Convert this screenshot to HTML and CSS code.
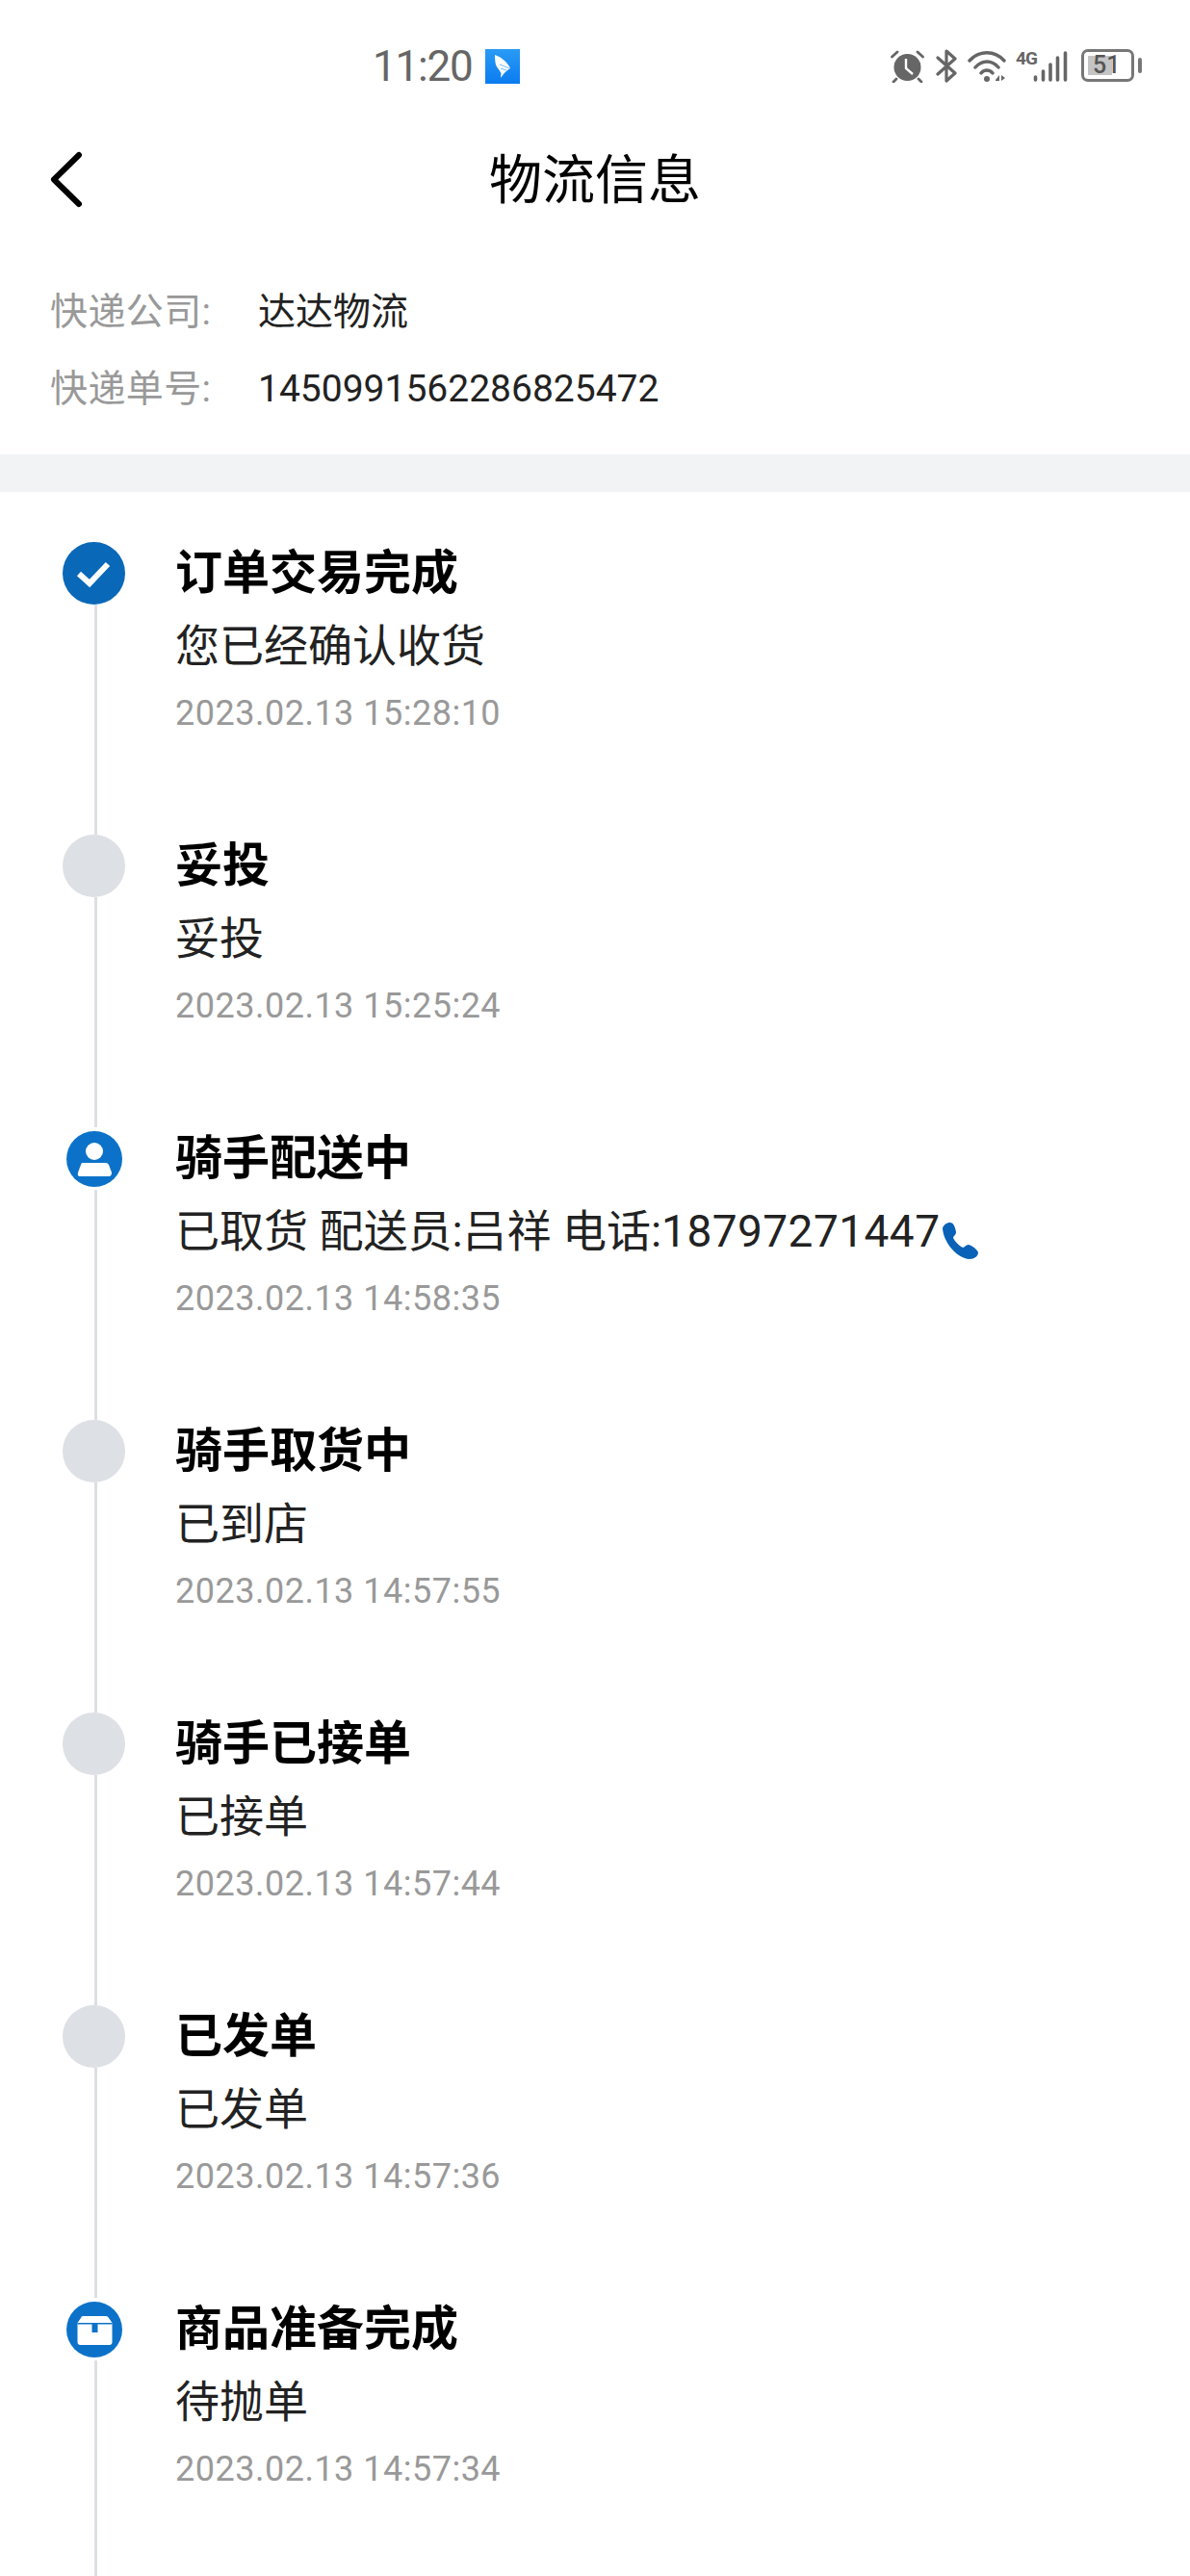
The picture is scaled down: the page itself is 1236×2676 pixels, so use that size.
FILE: index.html
```html
<!DOCTYPE html>
<html lang="zh-CN">
<head>
    <meta charset="UTF-8">
    <meta name="viewport" content="width=device-width, initial-scale=1.0">
    <title>物流信息</title>
    <link rel="stylesheet" href="styles.css">
</head>
<body>
    <div class="statusbar">
        <div class="status-center">
            <span class="clock">11:20</span>
            <svg class="app-icon" viewBox="0 0 36 36">
                <defs>
                    <linearGradient id="appBlue" x1="0" y1="0" x2="0" y2="1">
                        <stop offset="0" stop-color="#2a9bf5"/>
                        <stop offset="1" stop-color="#0a7cf0"/>
                    </linearGradient>
                </defs>
                <rect width="36" height="36" fill="url(#appBlue)"/>
                <path d="M10 6 C16 8 23 13 26 20 C23 22 20 24 16 30 L16.5 25 L14 21 C11 18 10 14 10 6 Z" fill="#fff"/>
                <path d="M25 20 L15 16 M22 22 L16 20" stroke="#4aa8f5" stroke-width="0.8"/>
            </svg>
        </div>
        <div class="status-right">
            <svg class="ic-alarm" viewBox="0 0 35 34">
                <circle cx="17.5" cy="18" r="14" fill="#666"/>
                <path d="M16 9 V19 L23 25" fill="none" stroke="#fff" stroke-width="2.4"/>
                <path d="M1.5 7 L7 2 M28 2 L33.5 7 M6 30 L3 33 M29 30 L32 33" stroke="#666" stroke-width="2.8" stroke-linecap="round"/>
            </svg>
            <svg class="ic-bt" viewBox="0 0 22 35">
                <path d="M2 9 L20 25 L11 33 V2 L20 10 L2 26" fill="none" stroke="#666" stroke-width="3.2" stroke-linejoin="round" stroke-linecap="round"/>
            </svg>
            <svg class="ic-wifi" viewBox="0 0 40 33">
                <path d="M2 11 C12 0 28 0 38 11 M8 18 C15 10 25 10 32 18 M14 24 C17 20 23 20 26 24" fill="none" stroke="#666" stroke-width="3.4" stroke-linecap="round"/>
                <circle cx="20" cy="30" r="3" fill="#666"/>
                <path d="M29 31 L33 26 V32 H29 Z M35 26 V32 L39 29 Z" fill="#666"/>
            </svg>
            <div class="signal">
                <span class="net">4G</span>
                <svg class="ic-bars" viewBox="0 0 36 32">
                    <path d="M2.5 27 V30 M10.5 21 V30 M18 14 V30 M25.5 7 V30 M33.5 2 V30" fill="none" stroke="#666" stroke-width="3.6" stroke-linecap="round"/>
                </svg>
            </div>
            <div class="battery">
                <div class="battery-body"><span class="battery-level">51</span></div>
                <div class="battery-nub"></div>
            </div>
        </div>
    </div>

    <header class="navbar">
        <svg class="back" viewBox="0 0 36 62">
            <path d="M32 6 L6 31.5 L32 57" fill="none" stroke="#000" stroke-width="6" stroke-linecap="round" stroke-linejoin="round"/>
        </svg>
        <h1>物流信息</h1>
    </header>

    <section class="info">
        <p><span class="label">快递公司:</span><span class="value">达达物流</span></p>
        <p><span class="label">快递单号:</span><span class="value">1450991562286825472</span></p>
    </section>

    <div class="band"></div>

    <ul class="timeline">
        <li class="step">
            <div class="rail">
                <div class="slot">
                    <svg class="dot-lg" viewBox="0 0 65 65">
                        <circle cx="32.5" cy="32.5" r="32.5" fill="#0a68b8"/>
                        <path d="M17 33 L28 43 L47 23" fill="none" stroke="#fff" stroke-width="6"/>
                    </svg>
                </div>
                <div class="line"></div>
            </div>
            <div class="body">
                <h3>订单交易完成</h3>
                <p class="desc">您已经确认收货</p>
                <p class="time">2023.02.13 15:28:10</p>
            </div>
        </li>
        <li class="step">
            <div class="rail">
                <div class="slot"><div class="dot-off"></div></div>
                <div class="line"></div>
            </div>
            <div class="body">
                <h3>妥投</h3>
                <p class="desc">妥投</p>
                <p class="time">2023.02.13 15:25:24</p>
            </div>
        </li>
        <li class="step">
            <div class="rail">
                <div class="slot">
                    <svg class="dot-sm" viewBox="0 0 58 58">
                        <circle cx="29" cy="29" r="29" fill="#0c72c9"/>
                        <circle cx="29" cy="21" r="9" fill="#fff"/>
                        <path d="M17 33 H41 Q43 33 44 35 L47 43 Q47 47 44 47 H14 Q11 47 12 43 L15 35 Q15 33 17 33 Z" fill="#fff"/>
                    </svg>
                </div>
                <div class="line"></div>
            </div>
            <div class="body">
                <h3>骑手配送中</h3>
                <p class="desc">已取货 配送员:吕祥 电话:<span class="tel">18797271447</span><svg class="ic-phone" viewBox="0 0 40 40"><path d="M2 7 C3 3 7 1 10 1 C13 1 15 5 16 11 C16 14 13 15 13 17 C15 21 19 25 23 27 C25 27 26 24 29 24 C33 25 38 29 39 32 C39 36 35 39 30 39 C17 38 3 22 2 7 Z" fill="#0a62b8"/></svg></p>
                <p class="time">2023.02.13 14:58:35</p>
            </div>
        </li>
        <li class="step">
            <div class="rail">
                <div class="slot"><div class="dot-off"></div></div>
                <div class="line"></div>
            </div>
            <div class="body">
                <h3>骑手取货中</h3>
                <p class="desc">已到店</p>
                <p class="time">2023.02.13 14:57:55</p>
            </div>
        </li>
        <li class="step">
            <div class="rail">
                <div class="slot"><div class="dot-off"></div></div>
                <div class="line"></div>
            </div>
            <div class="body">
                <h3>骑手已接单</h3>
                <p class="desc">已接单</p>
                <p class="time">2023.02.13 14:57:44</p>
            </div>
        </li>
        <li class="step">
            <div class="rail">
                <div class="slot"><div class="dot-off"></div></div>
                <div class="line"></div>
            </div>
            <div class="body">
                <h3>已发单</h3>
                <p class="desc">已发单</p>
                <p class="time">2023.02.13 14:57:36</p>
            </div>
        </li>
        <li class="step">
            <div class="rail">
                <div class="slot">
                    <svg class="dot-sm" viewBox="0 0 58 58">
                        <circle cx="29" cy="29" r="29" fill="#0c72c9"/>
                        <path d="M17 15 H41 Q43 15 44 17 L47.5 22 V42 Q47.5 45 44.5 45 H14.5 Q11.5 45 11.5 42 V22 L15 17 Q15.5 15 17 15 Z" fill="#fff"/>
                        <path d="M11.5 22.8 H47.5" stroke="#0c72c9" stroke-width="1.5"/>
                        <rect x="26.5" y="22" width="6" height="10" fill="#0c72c9"/>
                    </svg>
                </div>
                <div class="line"></div>
            </div>
            <div class="body">
                <h3>商品准备完成</h3>
                <p class="desc">待抛单</p>
                <p class="time">2023.02.13 14:57:34</p>
            </div>
        </li>
    </ul>
</body>
</html>
```

FILE: styles.css
```css
*{
    margin: 0;
    padding: 0;
    box-sizing: border-box;
}
html, body{
    height: 2676px;
    overflow: hidden;
}
body{
    background-color: #fff;
    color: #222;
    font-family: Roboto, "Noto Sans CJK SC", sans-serif;
}

/* status bar */
.statusbar{
    height: 120px;
    padding: 51px 50px 0 387px;
    display: flex;
    justify-content: space-between;
    align-items: flex-start;
}
.status-center{
    display: flex;
    align-items: center;
}
.clock{
    width: 117px;
    font-size: 44px;
    line-height: 36px;
    letter-spacing: -1.2px;
    color: #666;
}
.app-icon{
    width: 36px;
    height: 36px;
}
.status-right{
    display: flex;
    align-items: flex-start;
    width: 261px;
}
.ic-alarm{
    width: 35px;
    height: 34px;
    margin-top: 1px;
    margin-right: 12px;
}
.ic-bt{
    width: 22px;
    height: 35px;
    margin-right: 11px;
}
.ic-wifi{
    width: 40px;
    height: 33px;
    margin-top: 1px;
    margin-right: 10px;
}
.signal{
    display: flex;
    align-items: flex-start;
    margin-right: 14px;
    width: 54px;
    height: 35px;
}
.net{
    width: 18px;
    font-size: 19px;
    font-weight: 700;
    line-height: 16px;
    letter-spacing: -1px;
    color: #666;
    margin-top: 2px;
}
.ic-bars{
    width: 36px;
    height: 32px;
    margin-top: 2px;
}
.battery{
    display: flex;
    align-items: center;
    gap: 4px;
}
.battery-body{
    width: 55px;
    height: 34px;
    border: 3px solid #777;
    border-radius: 7px;
    padding: 4px;
    display: flex;
}
.battery-level{
    width: 25px;
    height: 20px;
    background-color: #c4c4c4;
    color: #555;
    font-size: 25px;
    line-height: 20px;
    font-weight: 500;
    white-space: nowrap;
    padding-left: 5px;
}
.battery-nub{
    width: 4px;
    height: 16px;
    background-color: #777;
    border-radius: 2px;
}

/* title */
.navbar{
    height: 132px;
    display: grid;
    grid-template-columns: 1fr auto 1fr;
    align-items: center;
}
.back{
    width: 36px;
    height: 62px;
    margin-left: 50px;
}
.navbar h1{
    padding-top: 2px;
    font-size: 55px;
    font-weight: 400;
    line-height: 64px;
    color: #000;
}

/* courier info */
.info{
    height: 220px;
    padding: 46px 0 0 52px;
    font-size: 39px;
}
.info p{
    display: flex;
    height: 56px;
    line-height: 52px;
    margin-bottom: 24px;
}
.label{
    width: 216px;
    letter-spacing: 0.4px;
    color: #999;
}
.value{
    color: #222;
}
.band{
    height: 39px;
    background-color: #f2f3f5;
}

/* timeline */
.timeline{
    list-style: none;
    padding: 52px 0 0 65px;
}
.step{
    height: 304px;
    display: flex;
    gap: 52px;
}
.rail{
    width: 65px;
    display: flex;
    flex-direction: column;
    align-items: center;
}
.slot{
    width: 65px;
    height: 65px;
    flex-shrink: 0;
    display: flex;
    align-items: center;
    justify-content: center;
}
.dot-lg{
    width: 65px;
    height: 65px;
}
.dot-sm{
    width: 58px;
    height: 58px;
}
.dot-off{
    width: 65px;
    height: 65px;
    border-radius: 50%;
    background-color: #dde0e4;
}
.line{
    flex: 1;
    width: 3px;
    margin-left: 4px;
    background-color: #dcdfe3;
}
.body{
    padding-top: 2px;
}
.body h3{
    font-size: 49px;
    font-weight: 700;
    line-height: 62px;
    color: #000;
}
.desc{
    margin-top: 13px;
    font-size: 46px;
    line-height: 62px;
    color: #222;
    white-space: nowrap;
}
.tel{
    letter-spacing: 0.45px;
}
.ic-phone{
    width: 40px;
    height: 40px;
    vertical-align: -14px;
    margin-left: 1px;
}
.time{
    margin-top: 14px;
    font-size: 36px;
    line-height: 50px;
    letter-spacing: 0.5px;
    color: #999;
}
```
